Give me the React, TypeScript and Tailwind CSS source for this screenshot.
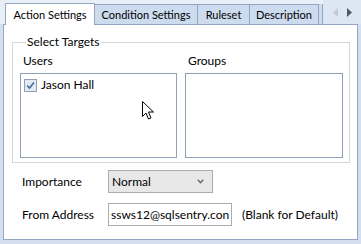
import React from "react";

const tabs = [
  { label: "Condition Settings", w: "w-[103px]" },
  { label: "Ruleset", w: "w-[52px]" },
  { label: "Description", w: "w-[69px]" },
];

function Cursor() {
  return (
    <svg width="13" height="20" viewBox="0 0 13 20" className="absolute left-[142px] top-[101px]">
      <path d="M0.5 0.5 L0.5 15.5 L4 12 L6.5 18 L9 17 L6.5 11 L11.5 11 Z" fill="#fff" stroke="#000" strokeWidth="1" />
    </svg>
  );
}

export default function App() {
  return (
    <div className="relative w-[361px] h-[244px] overflow-hidden bg-[#d3dfee] font-[Lato,sans-serif] text-[12px] leading-[16px] text-black whitespace-nowrap">
      {/* TAB STRIP */}
      <div className="flex h-[24px] items-end pl-[5px] bg-[#e9eff7]">
        <div className="w-[90px] shrink-0 h-[22px] flex items-center justify-center bg-white border border-b-0 border-[#93a7c2] relative z-10 -mb-px text-[11px]">
          Action Settings
        </div>
        {tabs.map((t) => (
          <div
            key={t.label}
            className={`${t.w} shrink-0 h-[20px] flex items-center justify-center bg-[#cddbee] border border-l-0 border-b-0 border-[#93a7c2] text-[11px]`}
          >
            {t.label}
          </div>
        ))}
        <div className="shrink-0 h-[20px] w-[4px] bg-[#cddbee] border-r border-[#93a7c2]" />
        <div className="flex-1 h-[24px] flex items-center justify-center gap-[9px] bg-[#dde7f4]">
          <svg width="5" height="9" viewBox="0 0 5 9"><path d="M5 0 L0 4.5 L5 9 Z" fill="#c2ccd9" /></svg>
          <svg width="5" height="9" viewBox="0 0 5 9"><path d="M0 0 L5 4.5 L0 9 Z" fill="#4d5868" /></svg>
        </div>
      </div>

      {/* PANEL */}
      <div className="ml-[3px] w-[355px] h-[216px] bg-white border border-[#93a7c2] pl-[8px] pr-[7px] pt-[9px]">
        <fieldset className="border border-[#d5d5d5] pl-[7px] pr-[6px] h-[129px]">
          <legend className="px-[1px] ml-[6px]">Select Targets</legend>
          <div className="flex gap-[8px] mt-[3px]">
            <div className="flex flex-col w-[157px] shrink-0">
              <span className="ml-[3px]">Users</span>
              <div className="mt-[4px] h-[85px] border border-[#8fa0b8] pl-[3px] pt-[3px]">
                <label className="flex items-center gap-[4px]">
                  <span className="w-[13px] h-[13px] border border-[#8e9fb6] bg-[#e4eaf3] flex items-center justify-center">
                    <svg width="9" height="9" viewBox="0 0 9 9">
                      <path d="M1 4.5 L3.5 7 L8 1.5" fill="none" stroke="#4a6a98" strokeWidth="1.6" />
                    </svg>
                  </span>
                  <span>Jason Hall</span>
                </label>
              </div>
            </div>
            <div className="flex flex-col w-[158px] shrink-0">
              <span className="ml-[3px]">Groups</span>
              <div className="mt-[4px] h-[85px] border border-[#8fa0b8]" />
            </div>
          </div>
        </fieldset>

        <div className="mt-[7px] flex flex-col gap-[10px] pl-[10px]">
          <div className="flex items-center">
            <span className="w-[86px] shrink-0">Importance</span>
            <div className="w-[105px] shrink-0 h-[23px] border border-[#acacac] bg-[#e8e8e8] flex items-center justify-between pl-[3px] pr-[8px]">
              <span>Normal</span>
              <svg width="7" height="5" viewBox="0 0 7 5">
                <path d="M0.8 0.8 L3.5 3.8 L6.2 0.8" fill="none" stroke="#666" strokeWidth="1.4" />
              </svg>
            </div>
          </div>
          <div className="flex items-center">
            <span className="w-[86px] shrink-0">From Address</span>
            <div className="w-[124px] shrink-0 h-[23px] border border-[#abadb3] bg-white flex items-center pl-[2px] overflow-hidden">
              <span>ssws12@sqlsentry.con</span>
            </div>
            <span className="ml-[10px] shrink-0">(Blank for Default)</span>
          </div>
        </div>
      </div>

      <Cursor />
    </div>
  );
}
